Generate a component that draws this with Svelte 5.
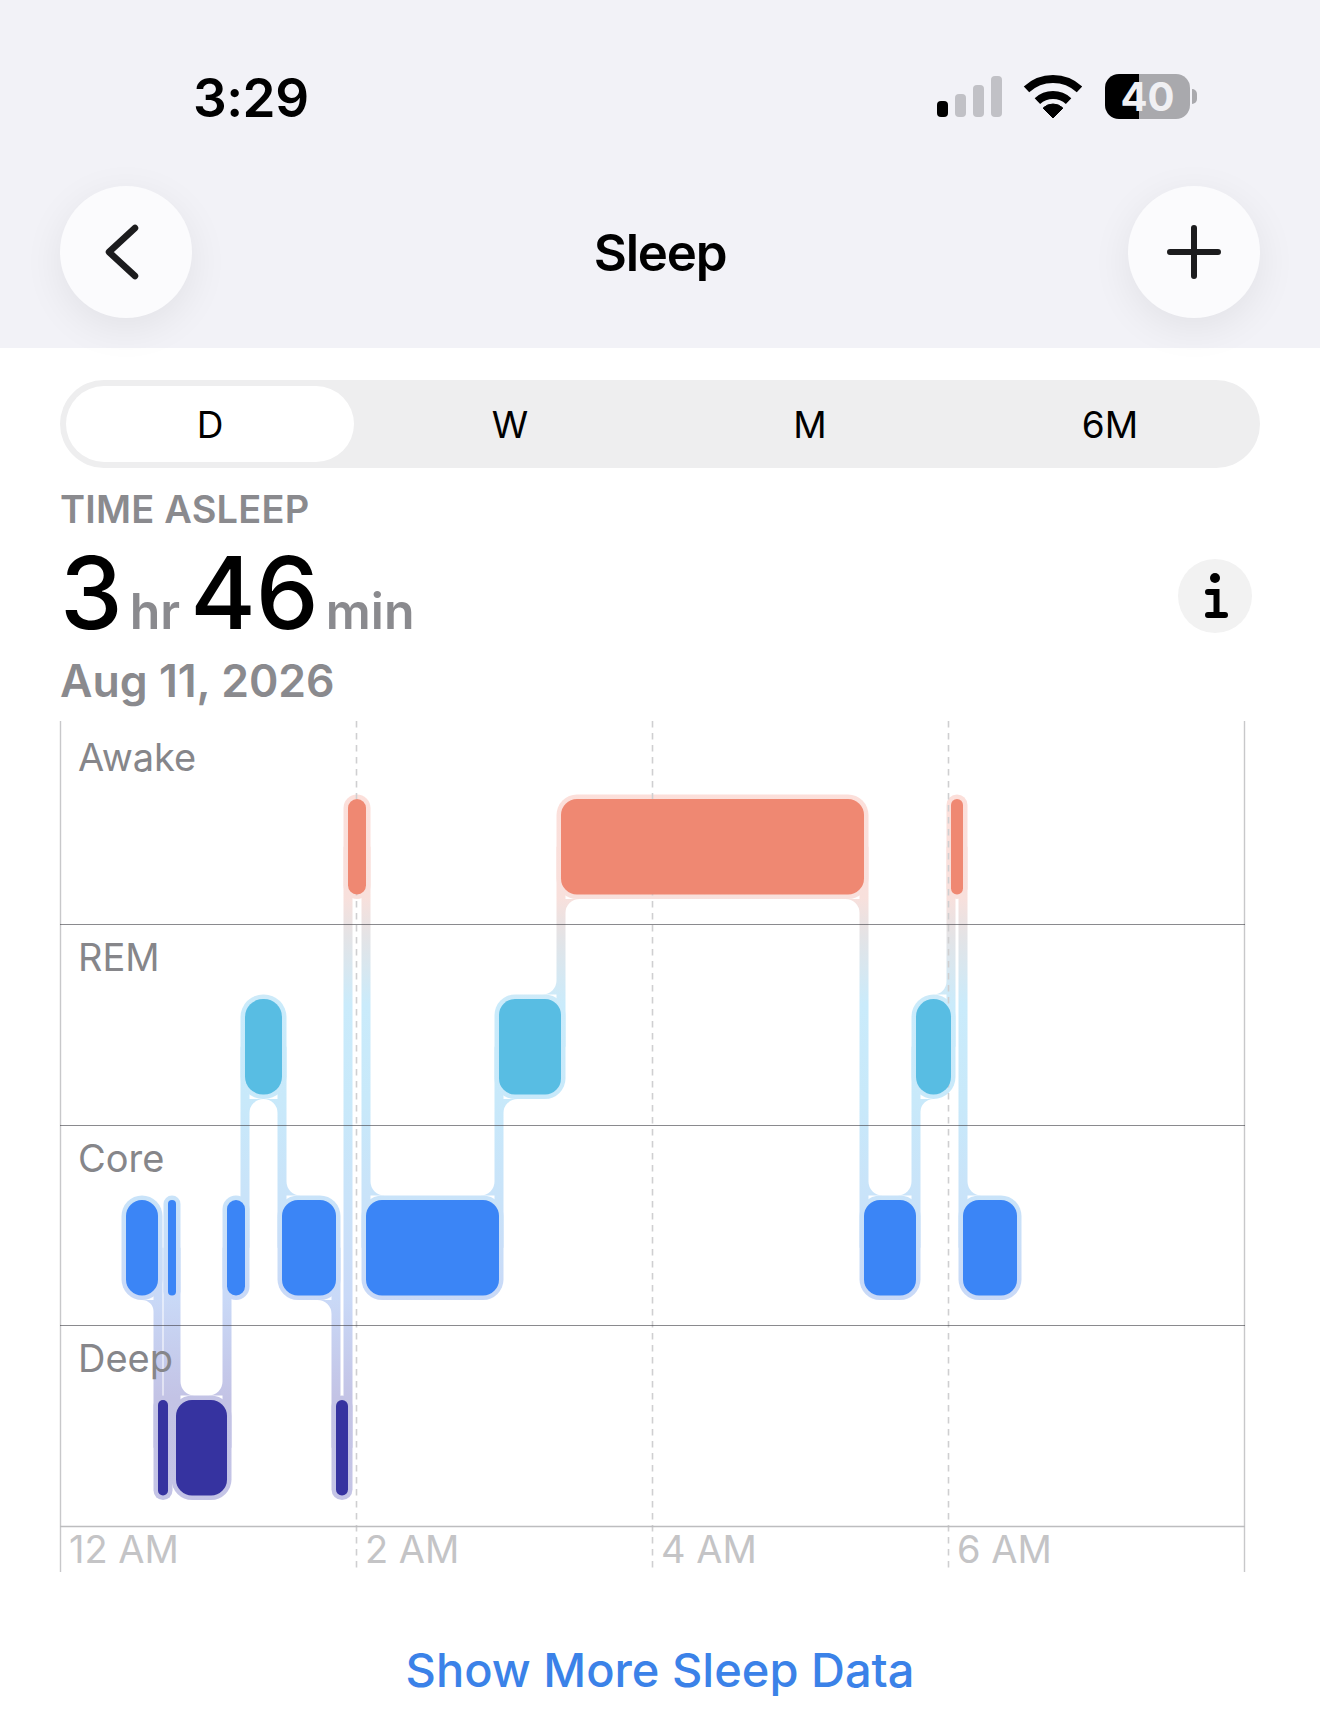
<script>
  const LV = { a: 799, r: 999, c: 1200, d: 1400 };
  const H = 95.5;
  const PAD = 4.5;
  const COL = { a: '#ef8872', r: '#58bde3', c: '#3b85f6', d: '#3633a0' };
  const bars = [
    ['c', 126, 158], ['d', 158, 168], ['c', 168, 176], ['d', 176, 227], ['c', 227, 245],
    ['r', 245, 282], ['c', 282, 336], ['d', 336, 348], ['a', 348, 366], ['c', 366, 499],
    ['r', 499, 561], ['a', 561, 864], ['c', 864, 916], ['r', 916, 951], ['a', 951, 963],
    ['c', 963, 1017]
  ].map(([l, x1, x2]) => {
    const w = x2 - x1;
    return { l, x: x1, y: LV[l], w, rx: Math.min(w / 2, w > 40 ? 16 : 18) };
  });

  const fillet = (x, y, dx, dy, r) => {
    const sweep = dx * dy > 0 ? 1 : 0;
    return `M${x} ${y}L${x} ${y + dy * r}A${r} ${r} 0 0 ${sweep} ${x + dx * r} ${y}Z`;
  };

  let d = '';
  for (let i = 0; i < bars.length - 1; i++) {
    const L = bars[i], R = bars[i + 1];
    const x = R.x;
    const xl = x - PAD, xr = x + PAD;
    const lCy = L.y + H / 2, rCy = R.y + H / 2;
    const top = Math.min(lCy, rCy), bot = Math.max(lCy, rCy);
    d += `M${xl} ${top}H${xr}V${bot}H${xl}Z`;
    // the bar on the left joins the connector's left edge, the bar on the right its right edge
    const up = R.y < L.y;
    if (L.w > 25) {
      const y = up ? L.y - PAD : L.y + H + PAD;
      d += fillet(xl, y, -1, up ? -1 : 1, Math.min(14, (L.w - 9) / 2));
    }
    if (R.w > 25) {
      const y = up ? R.y + H + PAD : R.y - PAD;
      d += fillet(xr, y, 1, up ? 1 : -1, Math.min(14, (R.w - 9) / 2));
    }
  }

  const tabs = ['D', 'W', 'M', '6M'];
  const gridY = [924, 1125, 1325];
  const dashX = [356, 652, 948];
  const ticks = [[69, '12 AM'], [365, '2 AM'], [661, '4 AM'], [957, '6 AM']];
  const rows = [['Awake', 771], ['REM', 971], ['Core', 1172], ['Deep', 1372]];
</script>

<div class="page">
  <header class="nav">
    <div class="status">
      <span class="time">3:29</span>
      <div class="indicators">
        <svg class="signal" width="66" height="42" viewBox="0 0 66 42">
          <rect x="1" y="25" width="11" height="16" rx="4" fill="#000" />
          <rect x="19" y="18" width="11" height="23" rx="4" fill="#c1c1c6" />
          <rect x="37" y="9" width="11" height="32" rx="4" fill="#c1c1c6" />
          <rect x="55" y="0" width="11" height="41" rx="4" fill="#c1c1c6" />
        </svg>
        <svg class="wifi" width="60" height="44" viewBox="0 0 60 44">
          <path d="M30 43 L20.1 33.1 A14 14 0 0 1 39.9 33.1 Z" fill="#000" stroke="#000" stroke-width="1" stroke-linejoin="round" />
          <path d="M14.4 26.1 A23 23 0 0 1 45.6 26.1" fill="none" stroke="#000" stroke-width="8" />
          <path d="M3.5 14.4 A39 39 0 0 1 56.5 14.4" fill="none" stroke="#000" stroke-width="8" />
        </svg>
        <div class="battery">
          <div class="cell"><span>40</span></div>
          <div class="nub"></div>
        </div>
      </div>
    </div>
    <div class="bar">
      <button class="round" aria-label="Back">
        <svg width="40" height="58" viewBox="0 0 40 58">
          <path d="M33 5 L7 29 L33 53" fill="none" stroke="#1c1c1e" stroke-width="6.5" stroke-linecap="round" stroke-linejoin="round" />
        </svg>
      </button>
      <h1>Sleep</h1>
      <button class="round" aria-label="Add">
        <svg width="54" height="54" viewBox="0 0 54 54">
          <path d="M27 3 V51 M3 27 H51" fill="none" stroke="#1c1c1e" stroke-width="6" stroke-linecap="round" />
        </svg>
      </button>
    </div>
  </header>

  <main>
    <div class="tabs">
      {#each tabs as t, i}
        <div class="tab" class:on={i === 0}><span>{t}</span></div>
      {/each}
    </div>

    <div class="summary">
      <div class="eyebrow">TIME ASLEEP</div>
      <div class="value">
        <span class="big">3</span><span class="unit">hr</span><span class="big second">46</span><span class="unit">min</span>
      </div>
      <div class="date">Aug 11, 2026</div>
      <div class="info" role="img" aria-label="Info">
        <svg width="74" height="74" viewBox="0 0 74 74">
          <circle cx="37" cy="19" r="5" fill="#000" />
          <path d="M30 33 H38.5 V55 M30 56 H47" fill="none" stroke="#000" stroke-width="6" stroke-linecap="round" />
        </svg>
      </div>
    </div>

    <svg class="chart" width="1320" height="860" viewBox="0 721 1320 860">
      <defs>
        <linearGradient id="halo" gradientUnits="userSpaceOnUse" x1="0" y1="790" x2="0" y2="1505">
          <stop offset="0" stop-color="#fcdfda" />
          <stop offset="0.15" stop-color="#f8e0dc" />
          <stop offset="0.2" stop-color="#e5e3e5" />
          <stop offset="0.3" stop-color="#caebfb" />
          <stop offset="0.43" stop-color="#c8e9fa" />
          <stop offset="0.57" stop-color="#c9e3f9" />
          <stop offset="0.71" stop-color="#c9d9f7" />
          <stop offset="0.85" stop-color="#c3c3e5" />
          <stop offset="1" stop-color="#c4c4e6" />
        </linearGradient>
      </defs>

      <path {d} fill="url(#halo)" />
      {#each bars as b}
        <rect x={b.x - PAD} y={b.y - PAD} width={b.w + 2 * PAD} height={H + 2 * PAD} rx={b.rx + PAD} fill="url(#halo)" />
      {/each}

      {#each dashX as x}
        <line x1={x + 0.5} x2={x + 0.5} y1="721" y2="1572" stroke="#cfcfd1" stroke-width="1.6" stroke-dasharray="6.5 5.5" />
      {/each}
      <line x1="60.5" x2="60.5" y1="721" y2="1572" stroke="#c8c8ca" stroke-width="1.4" />
      <line x1="1244.5" x2="1244.5" y1="721" y2="1572" stroke="#c8c8ca" stroke-width="1.4" />
      {#each gridY as y}
        <line x1="60" x2="1245" y1={y + 0.5} y2={y + 0.5} stroke="#3c3c43" stroke-opacity="0.6" stroke-width="1" />
      {/each}
      <line x1="60" x2="1245" y1="1526.5" y2="1526.5" stroke="#bdbdbf" stroke-width="1.6" />

      {#each bars as b}
        <rect x={b.x} y={b.y} width={b.w} height={H} rx={b.rx} fill={COL[b.l]} />
      {/each}

      {#each rows as [label, y]}
        <text class="row" x="78" {y}>{label}</text>
      {/each}
      {#each ticks as [x, label]}
        <text class="tick" {x} y="1563">{label}</text>
      {/each}
    </svg>

    <a class="more" href="#more">Show More Sleep Data</a>
  </main>
</div>

<style>
  :global(body) {
    margin: 0;
    background: #fff;
  }
  .page {
    width: 1320px;
    height: 1733px;
    overflow: hidden;
    font-family: Inter, "Liberation Sans", sans-serif;
    color: #000;
    background: #fff;
  }
  .nav {
    height: 348px;
    background: #f2f2f7;
    padding: 0 60px;
    box-sizing: border-box;
    position: relative;
  }
  .status {
    height: 186px;
    display: flex;
    align-items: flex-start;
    justify-content: space-between;
    padding: 66px 0 0 133px;
    box-sizing: border-box;
  }
  .time {
    font-size: 53px;
    font-weight: 600;
    line-height: 64px;
    letter-spacing: -0.5px;
  }
  .indicators {
    display: flex;
    align-items: flex-start;
    margin-right: 63px;
    padding-top: 8px;
  }
  .signal {
    margin-top: 2px;
    margin-right: 21px;
  }
  .wifi {
    margin-top: 1px;
    margin-right: 22px;
  }
  .battery {
    display: flex;
    align-items: center;
    gap: 2px;
  }
  .cell {
    width: 85px;
    height: 45px;
    border-radius: 14px;
    background: linear-gradient(90deg, #000 40%, #a9a9ad 40%);
    display: flex;
    align-items: center;
    justify-content: center;
    color: #f0f0f3;
    font-size: 40px;
    font-weight: 700;
    box-sizing: border-box;
  }
  .nub {
    width: 5px;
    height: 15px;
    border-radius: 0 8px 8px 0;
    background: #a9a9ad;
  }
  .bar {
    display: flex;
    align-items: center;
    justify-content: space-between;
    height: 132px;
  }
  .round {
    width: 132px;
    height: 132px;
    border: 0;
    padding: 0;
    border-radius: 50%;
    background: #fbfbfd;
    box-shadow: 0 10px 40px rgba(0, 0, 0, 0.07);
    display: flex;
    align-items: center;
    justify-content: center;
  }
  .round:first-child svg {
    margin-right: 8px;
  }
  h1 {
    margin: 2px 0 0;
    font-size: 51px;
    font-weight: 600;
    letter-spacing: -1.2px;
    line-height: 62px;
  }
  main {
    display: block;
  }
  .tabs {
    margin: 32px 60px 0;
    height: 88px;
    border-radius: 44px;
    background: #eeeeef;
    display: grid;
    grid-template-columns: repeat(4, 1fr);
  }
  .tab {
    display: flex;
    align-items: center;
    justify-content: center;
    font-size: 37px;
    font-weight: 400;
  }
  .tab.on {
    margin: 6px;
    border-radius: 38px;
    background: #fff;
  }
  .summary {
    position: relative;
    padding: 0 60px;
    height: 253px;
  }
  .eyebrow {
    padding-top: 19px;
    font-size: 38px;
    line-height: 44px;
    font-weight: 600;
    letter-spacing: 0.2px;
    color: #8a8a8e;
  }
  .value {
    display: flex;
    align-items: baseline;
    height: 110px;
    margin-top: 7px;
  }
  .big {
    font-size: 100px;
    line-height: 110px;
    font-weight: 500;
  }
  .second {
    margin-left: 10px;
  }
  .unit {
    font-size: 50px;
    font-weight: 600;
    color: #8a8a8e;
    margin-left: 7px;
  }
  .date {
    margin-top: 6px;
    font-size: 44.6px;
    line-height: 54px;
    font-weight: 600;
    color: #8a8a8e;
  }
  .info {
    position: absolute;
    left: 1178px;
    top: 91px;
    width: 74px;
    height: 74px;
    border-radius: 50%;
    background: #f2f2f2;
  }
  .info svg {
    display: block;
  }
  .chart {
    display: block;
  }
  .row {
    font-size: 38px;
    font-weight: 400;
    fill: #86868a;
  }
  .tick {
    font-size: 38px;
    font-weight: 400;
    fill: #c4c4c6;
  }
  .more {
    display: block;
    margin-top: 59px;
    text-align: center;
    color: #3b82e8;
    text-decoration: none;
    font-size: 47px;
    line-height: 60px;
    font-weight: 500;
  }
</style>
